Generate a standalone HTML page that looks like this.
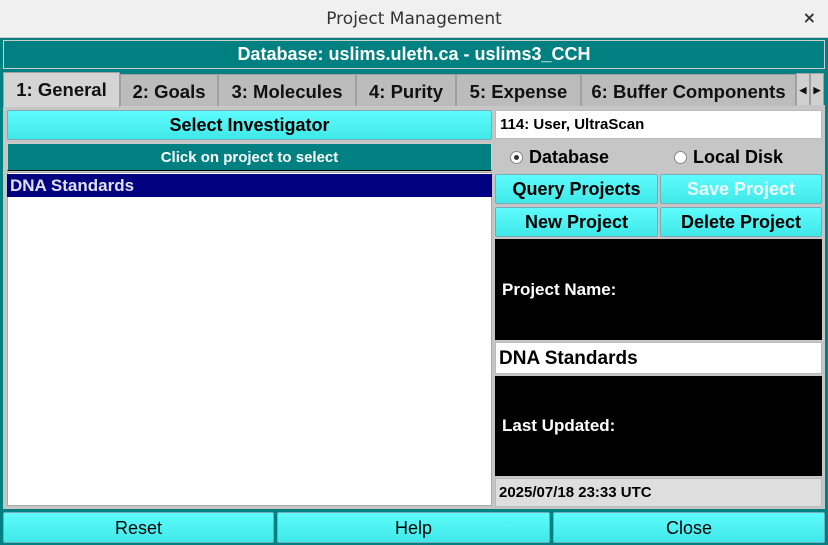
<!DOCTYPE html>
<html><head><style>
*{margin:0;padding:0;box-sizing:border-box}
body{width:828px;height:545px;background:#008080;font-family:"Liberation Sans",sans-serif;position:relative;overflow:hidden}
.a{position:absolute}
.btn{position:absolute;background:linear-gradient(#5ffcfc,#40e8e8);border:1px solid #7ab;border-radius:2px;text-align:center;font-weight:bold;font-size:18px;color:#000}
.tab{position:absolute;top:74px;height:32px;background:#bcbcbc;border:1px solid #a0a0a0;border-bottom:none;font-weight:bold;font-size:18.5px;text-align:center;line-height:33px;color:#111}
.blk{position:absolute;left:495px;width:327px;background:#000;color:#fff;font-weight:bold;font-size:17px;padding-left:7px}
.rad{display:inline-block;width:13px;height:13px;border-radius:50%;background:#fff;border:1px solid #888;vertical-align:-1px;margin-right:6px;position:relative}
</style></head><body>
<div class="a" style="left:0;top:0;width:828px;height:38px;background:#f0f0f0;border-bottom:1px solid #ccc;text-align:center;line-height:38px;font-family:'DejaVu Sans',sans-serif;font-size:17px;color:#333">Project Management</div>
<div class="a" style="right:12px;top:8px;font-size:16px;color:#333;font-family:'DejaVu Sans',sans-serif;font-weight:bold">×</div>
<div class="a" style="left:3px;top:40px;width:822px;height:29px;border:1px solid #ccc;background:#008080;color:#fff;font-weight:bold;font-size:18px;text-align:center;line-height:27px">Database: uslims.uleth.ca - uslims3_CCH</div>
<div class="a" style="left:3px;top:105px;width:822px;height:404px;background:#c6c6c6"></div>
<div class="tab" style="left:3px;width:117px;top:72px;height:35px;background:#d4d4d4;line-height:34px">1: General</div>
<div class="tab" style="left:120px;width:98px">2: Goals</div>
<div class="tab" style="left:218px;width:138px">3: Molecules</div>
<div class="tab" style="left:356px;width:100px">4: Purity</div>
<div class="tab" style="left:456px;width:125px">5: Expense</div>
<div class="tab" style="left:581px;width:215px">6: Buffer Components</div>
<div class="tab" style="left:796px;width:14px;top:73px;font-size:9px;background:#d0d0d0">◀</div>
<div class="tab" style="left:810px;width:14px;top:73px;font-size:9px;background:#d0d0d0">▶</div>
<div class="btn" style="left:7px;top:110px;width:485px;height:30px;line-height:28px">Select Investigator</div>
<div class="a" style="left:7px;top:143px;width:485px;height:28px;background:#008080;border:1px solid #ccc;border-bottom:1px solid #000;color:#fff;font-weight:bold;font-size:15px;text-align:center;line-height:27px">Click on project to select</div>
<div class="a" style="left:7px;top:172px;width:485px;height:334px;background:#fff;border:1px solid #aaa"></div>
<div class="a" style="left:7px;top:174px;width:485px;height:23px;background:#000080;color:#e0e0f0;font-weight:bold;font-size:17px;padding-left:3px;line-height:23px">DNA Standards</div>
<div class="a" style="left:495px;top:110px;width:327px;height:29px;background:#fff;border:1px solid #bbb;font-weight:bold;font-size:15px;line-height:27px;padding-left:4px">114: User, UltraScan</div>
<div class="a" style="left:510px;top:147px;font-weight:bold;font-size:18px"><span class="rad"><span class="a" style="left:3px;top:3px;width:5px;height:5px;border-radius:50%;background:#333"></span></span>Database</div>
<div class="a" style="left:674px;top:147px;font-weight:bold;font-size:18px"><span class="rad"></span>Local Disk</div>
<div class="btn" style="left:495px;top:174px;width:163px;height:30px;line-height:28px">Query Projects</div>
<div class="btn" style="left:660px;top:174px;width:162px;height:30px;line-height:28px;color:#eefefe">Save Project</div>
<div class="btn" style="left:495px;top:207px;width:163px;height:30px;line-height:28px">New Project</div>
<div class="btn" style="left:660px;top:207px;width:162px;height:30px;line-height:28px">Delete Project</div>
<div class="blk" style="top:239px;height:101px;line-height:101px">Project Name:</div>
<div class="a" style="left:495px;top:342px;width:327px;height:32px;background:#fff;border:1px solid #bbb;font-weight:bold;font-size:19px;line-height:31px;padding-left:3px">DNA Standards</div>
<div class="blk" style="top:376px;height:100px;line-height:100px">Last Updated:</div>
<div class="a" style="left:495px;top:478px;width:327px;height:29px;background:#dedede;border:1px solid #bbb;font-weight:bold;font-size:15px;line-height:28px;padding-left:3px">2025/07/18 23:33 UTC</div>
<div class="btn" style="left:3px;top:512px;width:271px;height:31px;line-height:30px;font-weight:normal">Reset</div>
<div class="btn" style="left:277px;top:512px;width:273px;height:31px;line-height:30px;font-weight:normal">Help</div>
<div class="btn" style="left:553px;top:512px;width:272px;height:31px;line-height:30px;font-weight:normal">Close</div>
</body></html>
